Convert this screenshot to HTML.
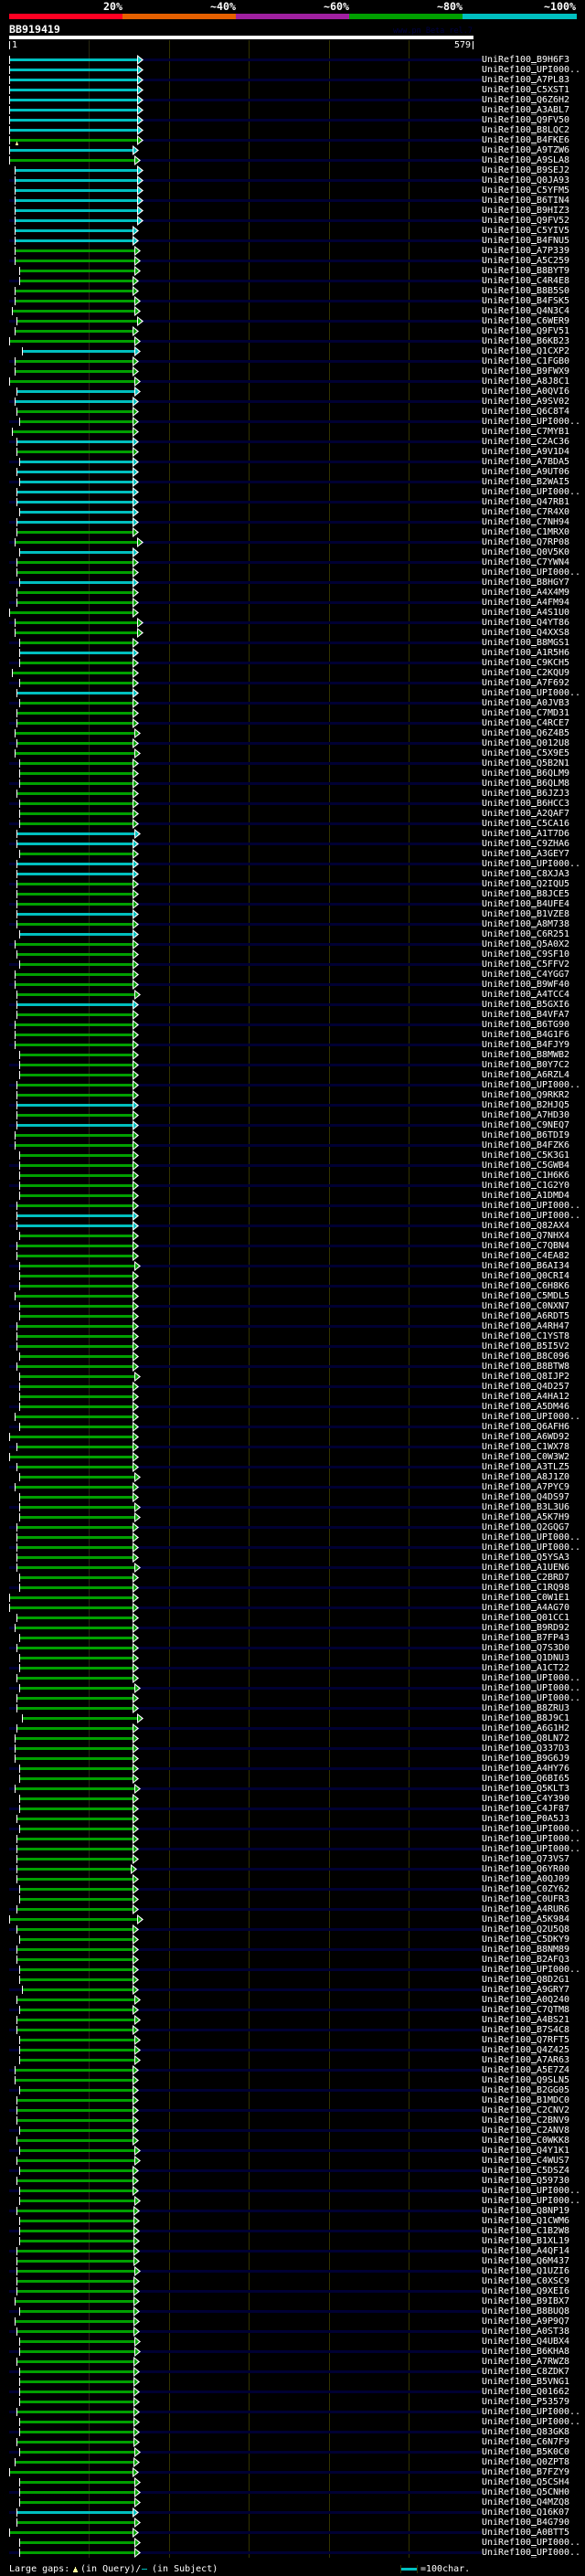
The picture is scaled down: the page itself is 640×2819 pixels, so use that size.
<!DOCTYPE html>
<html><head><meta charset="utf-8"><title>BB919419</title>
<style>
html,body{margin:0;padding:0;background:#000;width:640px;height:2819px;overflow:hidden}
body{position:relative;font:10px/11px "DejaVu Sans Mono","Liberation Mono",monospace;color:#fff}
.t{position:absolute;white-space:pre}
.b{font:bold 11.62px/12px "DejaVu Sans Mono","Liberation Mono",monospace}
.s{position:absolute}
.g{position:absolute;top:44px;width:1px;height:2755px;background:#333300}
#n{position:absolute;left:10px;top:64px;width:517px;height:2732px;background:repeating-linear-gradient(#000033 0,#000033 3px,transparent 3px,transparent 22px)}
#u{position:absolute;left:581px;top:68px;width:6px;height:2739px;background:repeating-linear-gradient(#fff 0,#fff 1px,transparent 1px,transparent 11px)}
#r{position:absolute;left:0;top:60px;width:200px}
#r p{--k:#00a000;--e:145px;position:relative;height:11px;margin:0 0 0 var(--s);width:calc(var(--e) - var(--s));background:linear-gradient(var(--k),var(--k)) 0 4px/100% 3px no-repeat}
#r p::before{content:"";position:absolute;left:0;top:1px;width:1px;height:9px;background:#fff}
#r i{position:absolute;left:100%;top:0;width:7px;height:11px;background:#fff;clip-path:polygon(0 0,100% 50%,0 100%)}
#r i::before{content:"";position:absolute;left:1px;top:2px;width:4px;height:7px;background:var(--k);clip-path:polygon(0 0,100% 50%,0 100%)}
#r p.c{--k:#00c0c0}
.a10{--s:10px}.a13{--s:13px}.a16{--s:16px}.a18{--s:18px}.a21{--s:21px}.a24{--s:24px}
#r .z143{--e:143px}#r .z146{--e:146px}#r .z147{--e:147px}#r .z150{--e:150px}
#names{position:absolute;left:527px;top:60px;margin:0;font:10px/11px "DejaVu Sans Mono","Liberation Mono",monospace;letter-spacing:-.02px}
</style></head><body>
<div class="t b" style="left:113px;top:1px">20%</div>
<div class="t b" style="left:230px;top:1px">~40%</div>
<div class="t b" style="left:354px;top:1px">~60%</div>
<div class="t b" style="left:478px;top:1px">~80%</div>
<div class="t b" style="left:595px;top:1px">~100%</div>
<div class="s" style="left:10px;top:15px;width:124px;height:6px;background:#ff0022"></div>
<div class="s" style="left:134px;top:15px;width:124px;height:6px;background:#e66000"></div>
<div class="s" style="left:258px;top:15px;width:124px;height:6px;background:#a020a0"></div>
<div class="s" style="left:382px;top:15px;width:124px;height:6px;background:#00a000"></div>
<div class="s" style="left:506px;top:15px;width:125px;height:6px;background:#00c0c0"></div>
<div class="t b" style="left:10px;top:26px">BB919419</div>
<div class="t" style="right:123px;top:29px;color:#000044;font-size:8.5px">www.pn Beta rel.7</div>
<div class="s" style="left:10px;top:39px;width:508px;height:4px;background:#fff"></div>
<div class="s" style="left:10px;top:45px;width:1px;height:9px;background:#fff"></div>
<div class="t" style="left:13px;top:44px">1</div>
<div class="t" style="left:497px;top:44px">579</div>
<div class="s" style="left:517px;top:45px;width:1px;height:9px;background:#fff"></div>
<div class="g" style="left:97px;background:#262610"></div>
<div class="g" style="left:185px"></div>
<div class="g" style="left:272px"></div>
<div class="g" style="left:360px"></div>
<div class="g" style="left:447px"></div>
<div id="n"></div>
<div id="r">
<p class="a10 c z150"><i></i></p><p class="a10 c z150"><i></i></p><p class="a10 c z150"><i></i></p><p class="a10 c z150"><i></i></p><p class="a10 c z150"><i></i></p><p class="a10 c z150"><i></i></p><p class="a10 c z150"><i></i></p><p class="a10 c z150"><i></i></p>
<p class="a10 z150"><i></i></p><p class="a10 c"><i></i></p><p class="a10 z147"><i></i></p>
<p class="a16 c z150"><i></i></p><p class="a16 c z150"><i></i></p><p class="a16 c z150"><i></i></p><p class="a16 c z150"><i></i></p><p class="a16 c z150"><i></i></p><p class="a16 c z150"><i></i></p>
<p class="a16 c"><i></i></p><p class="a16 c"><i></i></p><p class="a16 z147"><i></i></p><p class="a16 z147"><i></i></p>
<p class="a21 z147"><i></i></p><p class="a21"><i></i></p><p class="a16"><i></i></p><p class="a16 z147"><i></i></p><p class="a13 z147"><i></i></p><p class="a18 z150"><i></i></p><p class="a16"><i></i></p><p class="a10 z147"><i></i></p>
<p class="a24 c z147"><i></i></p><p class="a16"><i></i></p><p class="a16"><i></i></p><p class="a10 z147"><i></i></p><p class="a18 c z147"><i></i></p><p class="a16 c"><i></i></p>
<p class="a18"><i></i></p><p class="a21"><i></i></p><p class="a13"><i></i></p><p class="a18 c"><i></i></p><p class="a18"><i></i></p><p class="a21 c"><i></i></p><p class="a18 c"><i></i></p><p class="a21 c"><i></i></p><p class="a18 c"><i></i></p><p class="a18 c"><i></i></p><p class="a21 c"><i></i></p><p class="a18 c"><i></i></p><p class="a18"><i></i></p>
<p class="a16 z150"><i></i></p><p class="a21 c"><i></i></p><p class="a18"><i></i></p><p class="a18"><i></i></p><p class="a21 c"><i></i></p><p class="a18"><i></i></p><p class="a18"><i></i></p><p class="a10"><i></i></p><p class="a16 z150"><i></i></p><p class="a16 z150"><i></i></p>
<p class="a21"><i></i></p><p class="a21 c"><i></i></p><p class="a21"><i></i></p><p class="a13"><i></i></p><p class="a21"><i></i></p><p class="a18 c"><i></i></p><p class="a21"><i></i></p><p class="a18"><i></i></p><p class="a18"><i></i></p><p class="a16 z147"><i></i></p><p class="a18"><i></i></p><p class="a16 z147"><i></i></p>
<p class="a21"><i></i></p><p class="a21"><i></i></p><p class="a21"><i></i></p><p class="a18"><i></i></p><p class="a21"><i></i></p><p class="a21"><i></i></p><p class="a21"><i></i></p>
<p class="a18 c z147"><i></i></p><p class="a18 c"><i></i></p><p class="a21"><i></i></p><p class="a18 c"><i></i></p><p class="a18 c"><i></i></p><p class="a18"><i></i></p><p class="a18"><i></i></p><p class="a18"><i></i></p><p class="a18 c"><i></i></p><p class="a18"><i></i></p><p class="a21 c"><i></i></p>
<p class="a16"><i></i></p><p class="a18"><i></i></p><p class="a21"><i></i></p><p class="a16"><i></i></p><p class="a16"><i></i></p><p class="a18 z147"><i></i></p><p class="a18 c"><i></i></p><p class="a18"><i></i></p><p class="a16"><i></i></p><p class="a16"><i></i></p><p class="a16"><i></i></p>
<p class="a21"><i></i></p><p class="a21"><i></i></p><p class="a21"><i></i></p><p class="a18"><i></i></p><p class="a18"><i></i></p><p class="a18 c"><i></i></p><p class="a18"><i></i></p><p class="a18 c"><i></i></p><p class="a16"><i></i></p><p class="a16"><i></i></p>
<p class="a21"><i></i></p><p class="a21"><i></i></p><p class="a21"><i></i></p><p class="a21"><i></i></p><p class="a21"><i></i></p><p class="a18"><i></i></p><p class="a18 c"><i></i></p><p class="a18 c"><i></i></p><p class="a21"><i></i></p><p class="a18"><i></i></p><p class="a18"><i></i></p>
<p class="a21 z147"><i></i></p><p class="a21"><i></i></p><p class="a21"><i></i></p><p class="a16"><i></i></p><p class="a21"><i></i></p><p class="a21"><i></i></p><p class="a18"><i></i></p><p class="a18"><i></i></p><p class="a18"><i></i></p><p class="a21"><i></i></p>
<p class="a18"><i></i></p><p class="a21 z147"><i></i></p><p class="a21"><i></i></p><p class="a21"><i></i></p><p class="a21"><i></i></p><p class="a16"><i></i></p><p class="a21"><i></i></p><p class="a10"><i></i></p><p class="a18"><i></i></p><p class="a10"><i></i></p><p class="a18"><i></i></p>
<p class="a21 z147"><i></i></p><p class="a16"><i></i></p><p class="a21"><i></i></p><p class="a21 z147"><i></i></p><p class="a21 z147"><i></i></p><p class="a18"><i></i></p><p class="a18"><i></i></p><p class="a18"><i></i></p><p class="a18"><i></i></p><p class="a18 z147"><i></i></p>
<p class="a21"><i></i></p><p class="a21"><i></i></p><p class="a10"><i></i></p><p class="a10"><i></i></p><p class="a18"><i></i></p><p class="a16"><i></i></p><p class="a21"><i></i></p><p class="a18"><i></i></p><p class="a21"><i></i></p><p class="a21"><i></i></p>
<p class="a18"><i></i></p><p class="a21 z147"><i></i></p><p class="a18"><i></i></p><p class="a18"><i></i></p><p class="a24 z150"><i></i></p><p class="a18"><i></i></p><p class="a16"><i></i></p><p class="a16"><i></i></p><p class="a16"><i></i></p>
<p class="a21"><i></i></p><p class="a21"><i></i></p><p class="a16 z147"><i></i></p><p class="a21"><i></i></p><p class="a21"><i></i></p><p class="a18"><i></i></p><p class="a21"><i></i></p><p class="a18"><i></i></p><p class="a18"><i></i></p><p class="a18"><i></i></p>
<p class="a18 z143"><i></i></p><p class="a18"><i></i></p><p class="a21"><i></i></p><p class="a21"><i></i></p><p class="a18"><i></i></p><p class="a10 z150"><i></i></p><p class="a18"><i></i></p><p class="a21"><i></i></p><p class="a18"><i></i></p><p class="a18"><i></i></p>
<p class="a21"><i></i></p><p class="a21"><i></i></p><p class="a24"><i></i></p><p class="a18 z147"><i></i></p><p class="a21"><i></i></p><p class="a18 z147"><i></i></p><p class="a18"><i></i></p><p class="a21 z147"><i></i></p><p class="a21 z147"><i></i></p><p class="a21 z147"><i></i></p>
<p class="a16"><i></i></p><p class="a16"><i></i></p><p class="a21"><i></i></p><p class="a18"><i></i></p><p class="a18"><i></i></p><p class="a18"><i></i></p><p class="a21"><i></i></p><p class="a18"><i></i></p><p class="a21 z147"><i></i></p><p class="a18 z147"><i></i></p>
<p class="a21"><i></i></p><p class="a18"><i></i></p><p class="a21"><i></i></p><p class="a21 z147"><i></i></p>
<p class="a18 z146"><i></i></p><p class="a21 z146"><i></i></p><p class="a21 z146"><i></i></p><p class="a21 z146"><i></i></p><p class="a18 z146"><i></i></p><p class="a18 z146"><i></i></p><p class="a18 z147"><i></i></p><p class="a18 z146"><i></i></p><p class="a18 z146"><i></i></p><p class="a16 z146"><i></i></p>
<p class="a21 z146"><i></i></p><p class="a16 z146"><i></i></p><p class="a18 z146"><i></i></p><p class="a21 z147"><i></i></p><p class="a21 z147"><i></i></p><p class="a18 z146"><i></i></p><p class="a21 z146"><i></i></p><p class="a21 z146"><i></i></p><p class="a21 z146"><i></i></p><p class="a21 z146"><i></i></p>
<p class="a18 z146"><i></i></p><p class="a21 z146"><i></i></p><p class="a21 z146"><i></i></p><p class="a18 z146"><i></i></p><p class="a21 z147"><i></i></p><p class="a16 z146"><i></i></p><p class="a10"><i></i></p><p class="a21 z147"><i></i></p><p class="a21 z147"><i></i></p><p class="a21 z147"><i></i></p>
<p class="a18 c"><i></i></p><p class="a18 z147"><i></i></p><p class="a10"><i></i></p><p class="a21 z147"><i></i></p><p class="a21 z147"><i></i></p>
</div>
<div class="s" style="left:18px;top:155px;width:1px;height:3px;background:#ffff99"></div>
<div class="s" style="left:17px;top:157px;width:3px;height:2px;background:#ffff99"></div>
<pre id="names">UniRef100_B9H6F3
UniRef100_UPI000..
UniRef100_A7PL83
UniRef100_C5XST1
UniRef100_Q6Z6H2
UniRef100_A3ABL7
UniRef100_Q9FV50
UniRef100_B8LQC2
UniRef100_B4FKE6
UniRef100_A9TZW6
UniRef100_A9SLA8
UniRef100_B9SEJ2
UniRef100_Q0JA93
UniRef100_C5YFM5
UniRef100_B6TIN4
UniRef100_B9HIZ3
UniRef100_Q9FV52
UniRef100_C5YIV5
UniRef100_B4FNU5
UniRef100_A7P339
UniRef100_A5C259
UniRef100_B8BYT9
UniRef100_C4R4E8
UniRef100_B8B5S0
UniRef100_B4FSK5
UniRef100_Q4N3C4
UniRef100_C6WER9
UniRef100_Q9FV51
UniRef100_B6KB23
UniRef100_Q1CXP2
UniRef100_C1FGB0
UniRef100_B9FWX9
UniRef100_A8J8C1
UniRef100_A0QVI6
UniRef100_A9SV02
UniRef100_Q6C8T4
UniRef100_UPI000..
UniRef100_C7MYB1
UniRef100_C2AC36
UniRef100_A9V1D4
UniRef100_A7BDA5
UniRef100_A9UT06
UniRef100_B2WAI5
UniRef100_UPI000..
UniRef100_Q47RB1
UniRef100_C7R4X0
UniRef100_C7NH94
UniRef100_C1MRX0
UniRef100_Q7RP08
UniRef100_Q0V5K0
UniRef100_C7YWN4
UniRef100_UPI000..
UniRef100_B8HGY7
UniRef100_A4X4M9
UniRef100_A4FM94
UniRef100_A4S1U0
UniRef100_Q4YT86
UniRef100_Q4XXS8
UniRef100_B8MGS1
UniRef100_A1R5H6
UniRef100_C9KCH5
UniRef100_C2KQU9
UniRef100_A7F692
UniRef100_UPI000..
UniRef100_A0JVB3
UniRef100_C7MD31
UniRef100_C4RCE7
UniRef100_Q6Z4B5
UniRef100_Q012U8
UniRef100_C5X9E5
UniRef100_Q5B2N1
UniRef100_B6QLM9
UniRef100_B6QLM8
UniRef100_B6JZJ3
UniRef100_B6HCC3
UniRef100_A2QAF7
UniRef100_C5CA16
UniRef100_A1T7D6
UniRef100_C9ZHA6
UniRef100_A3GEY7
UniRef100_UPI000..
UniRef100_C8XJA3
UniRef100_Q2IQU5
UniRef100_B8JCE5
UniRef100_B4UFE4
UniRef100_B1VZE8
UniRef100_A8M738
UniRef100_C6R251
UniRef100_Q5A0X2
UniRef100_C9SF10
UniRef100_C5FFV2
UniRef100_C4YGG7
UniRef100_B9WF40
UniRef100_A4TCC4
UniRef100_B5GXI6
UniRef100_B4VFA7
UniRef100_B6TG90
UniRef100_B4G1F6
UniRef100_B4FJY9
UniRef100_B8MWB2
UniRef100_B0Y7C2
UniRef100_A6RZL4
UniRef100_UPI000..
UniRef100_Q9RKR2
UniRef100_B2HJQ5
UniRef100_A7HD30
UniRef100_C9NEQ7
UniRef100_B6TDI9
UniRef100_B4FZK6
UniRef100_C5K3G1
UniRef100_C5GWB4
UniRef100_C1H6K6
UniRef100_C1G2Y0
UniRef100_A1DMD4
UniRef100_UPI000..
UniRef100_UPI000..
UniRef100_Q82AX4
UniRef100_Q7NHX4
UniRef100_C7QBN4
UniRef100_C4EA82
UniRef100_B6AI34
UniRef100_Q0CRI4
UniRef100_C6H8K6
UniRef100_C5MDL5
UniRef100_C0NXN7
UniRef100_A6RDT5
UniRef100_A4RH47
UniRef100_C1YST8
UniRef100_B5I5V2
UniRef100_B8C096
UniRef100_B8BTW8
UniRef100_Q8IJP2
UniRef100_Q4D257
UniRef100_A4HA12
UniRef100_A5DM46
UniRef100_UPI000..
UniRef100_Q6AFH6
UniRef100_A6WD92
UniRef100_C1WX78
UniRef100_C0W3W2
UniRef100_A3TLZ5
UniRef100_A8J1Z0
UniRef100_A7PYC9
UniRef100_Q4DS97
UniRef100_B3L3U6
UniRef100_A5K7H9
UniRef100_Q2GQG7
UniRef100_UPI000..
UniRef100_UPI000..
UniRef100_Q5YSA3
UniRef100_A1UEN6
UniRef100_C2BRD7
UniRef100_C1RQ98
UniRef100_C0W1E1
UniRef100_A4AG70
UniRef100_Q01CC1
UniRef100_B9RD92
UniRef100_B7FP43
UniRef100_Q7S3D0
UniRef100_Q1DNU3
UniRef100_A1CT22
UniRef100_UPI000..
UniRef100_UPI000..
UniRef100_UPI000..
UniRef100_B8ZRU3
UniRef100_B8J9C1
UniRef100_A6G1H2
UniRef100_Q8LN72
UniRef100_Q337D3
UniRef100_B9G6J9
UniRef100_A4HY76
UniRef100_Q6BI65
UniRef100_Q5KLT3
UniRef100_C4Y390
UniRef100_C4JF87
UniRef100_P0A5J3
UniRef100_UPI000..
UniRef100_UPI000..
UniRef100_UPI000..
UniRef100_Q73VS7
UniRef100_Q6YR00
UniRef100_A0QJ09
UniRef100_C0ZY62
UniRef100_C0UFR3
UniRef100_A4RUR6
UniRef100_A5K984
UniRef100_Q2U5Q8
UniRef100_C5DKY9
UniRef100_B8NM89
UniRef100_B2AFQ3
UniRef100_UPI000..
UniRef100_Q8D2G1
UniRef100_A9GRY7
UniRef100_A0Q240
UniRef100_C7QTM8
UniRef100_A4BS21
UniRef100_B7S4C8
UniRef100_Q7RFT5
UniRef100_Q4Z425
UniRef100_A7AR63
UniRef100_A5E7Z4
UniRef100_Q9SLN5
UniRef100_B2GG05
UniRef100_B1MDC0
UniRef100_C2CNV2
UniRef100_C2BNV9
UniRef100_C2ANV8
UniRef100_C0WKK8
UniRef100_Q4Y1K1
UniRef100_C4WUS7
UniRef100_C5DSZ4
UniRef100_Q59730
UniRef100_UPI000..
UniRef100_UPI000..
UniRef100_Q8NP19
UniRef100_Q1CWM6
UniRef100_C1B2W8
UniRef100_B1XL19
UniRef100_A4QF14
UniRef100_Q6M437
UniRef100_Q1UZI6
UniRef100_C0XSC9
UniRef100_Q9XEI6
UniRef100_B9IBX7
UniRef100_B8BUQ8
UniRef100_A9P9Q7
UniRef100_A0ST38
UniRef100_Q4UBX4
UniRef100_B6KHA8
UniRef100_A7RWZ8
UniRef100_C8ZDK7
UniRef100_B5VNG1
UniRef100_Q01662
UniRef100_P53579
UniRef100_UPI000..
UniRef100_UPI000..
UniRef100_Q83GK8
UniRef100_C6N7F9
UniRef100_B5K0C0
UniRef100_Q0ZPT8
UniRef100_B7FZY9
UniRef100_Q5CSH4
UniRef100_Q5CNH0
UniRef100_Q4MZQ8
UniRef100_Q16K07
UniRef100_B4G790
UniRef100_A0BTT5
UniRef100_UPI000..
UniRef100_UPI000..</pre>
<div id="u"></div>
<div class="t" style="left:10px;top:2806px">Large gaps:</div>
<div class="s" style="left:82px;top:2809px;width:1px;height:3px;background:#ffff99"></div>
<div class="s" style="left:81px;top:2811px;width:3px;height:2px;background:#ffff99"></div>
<div class="s" style="left:80px;top:2813px;width:5px;height:2px;background:#ffff99"></div>
<div class="t" style="left:88px;top:2806px">(in Query)/</div>
<div class="s" style="left:155px;top:2811px;width:6px;height:1px;background:#00c0c0"></div>
<div class="t" style="left:166px;top:2806px">(in Subject)</div>
<div class="s" style="left:438px;top:2807px;width:1px;height:9px;background:#333300"></div>
<div class="s" style="left:439px;top:2810px;width:17px;height:3px;background:#00c0c0"></div>
<div class="s" style="left:456px;top:2807px;width:1px;height:9px;background:#333300"></div>
<div class="t" style="left:460px;top:2806px">=100char.</div>
</body></html>
